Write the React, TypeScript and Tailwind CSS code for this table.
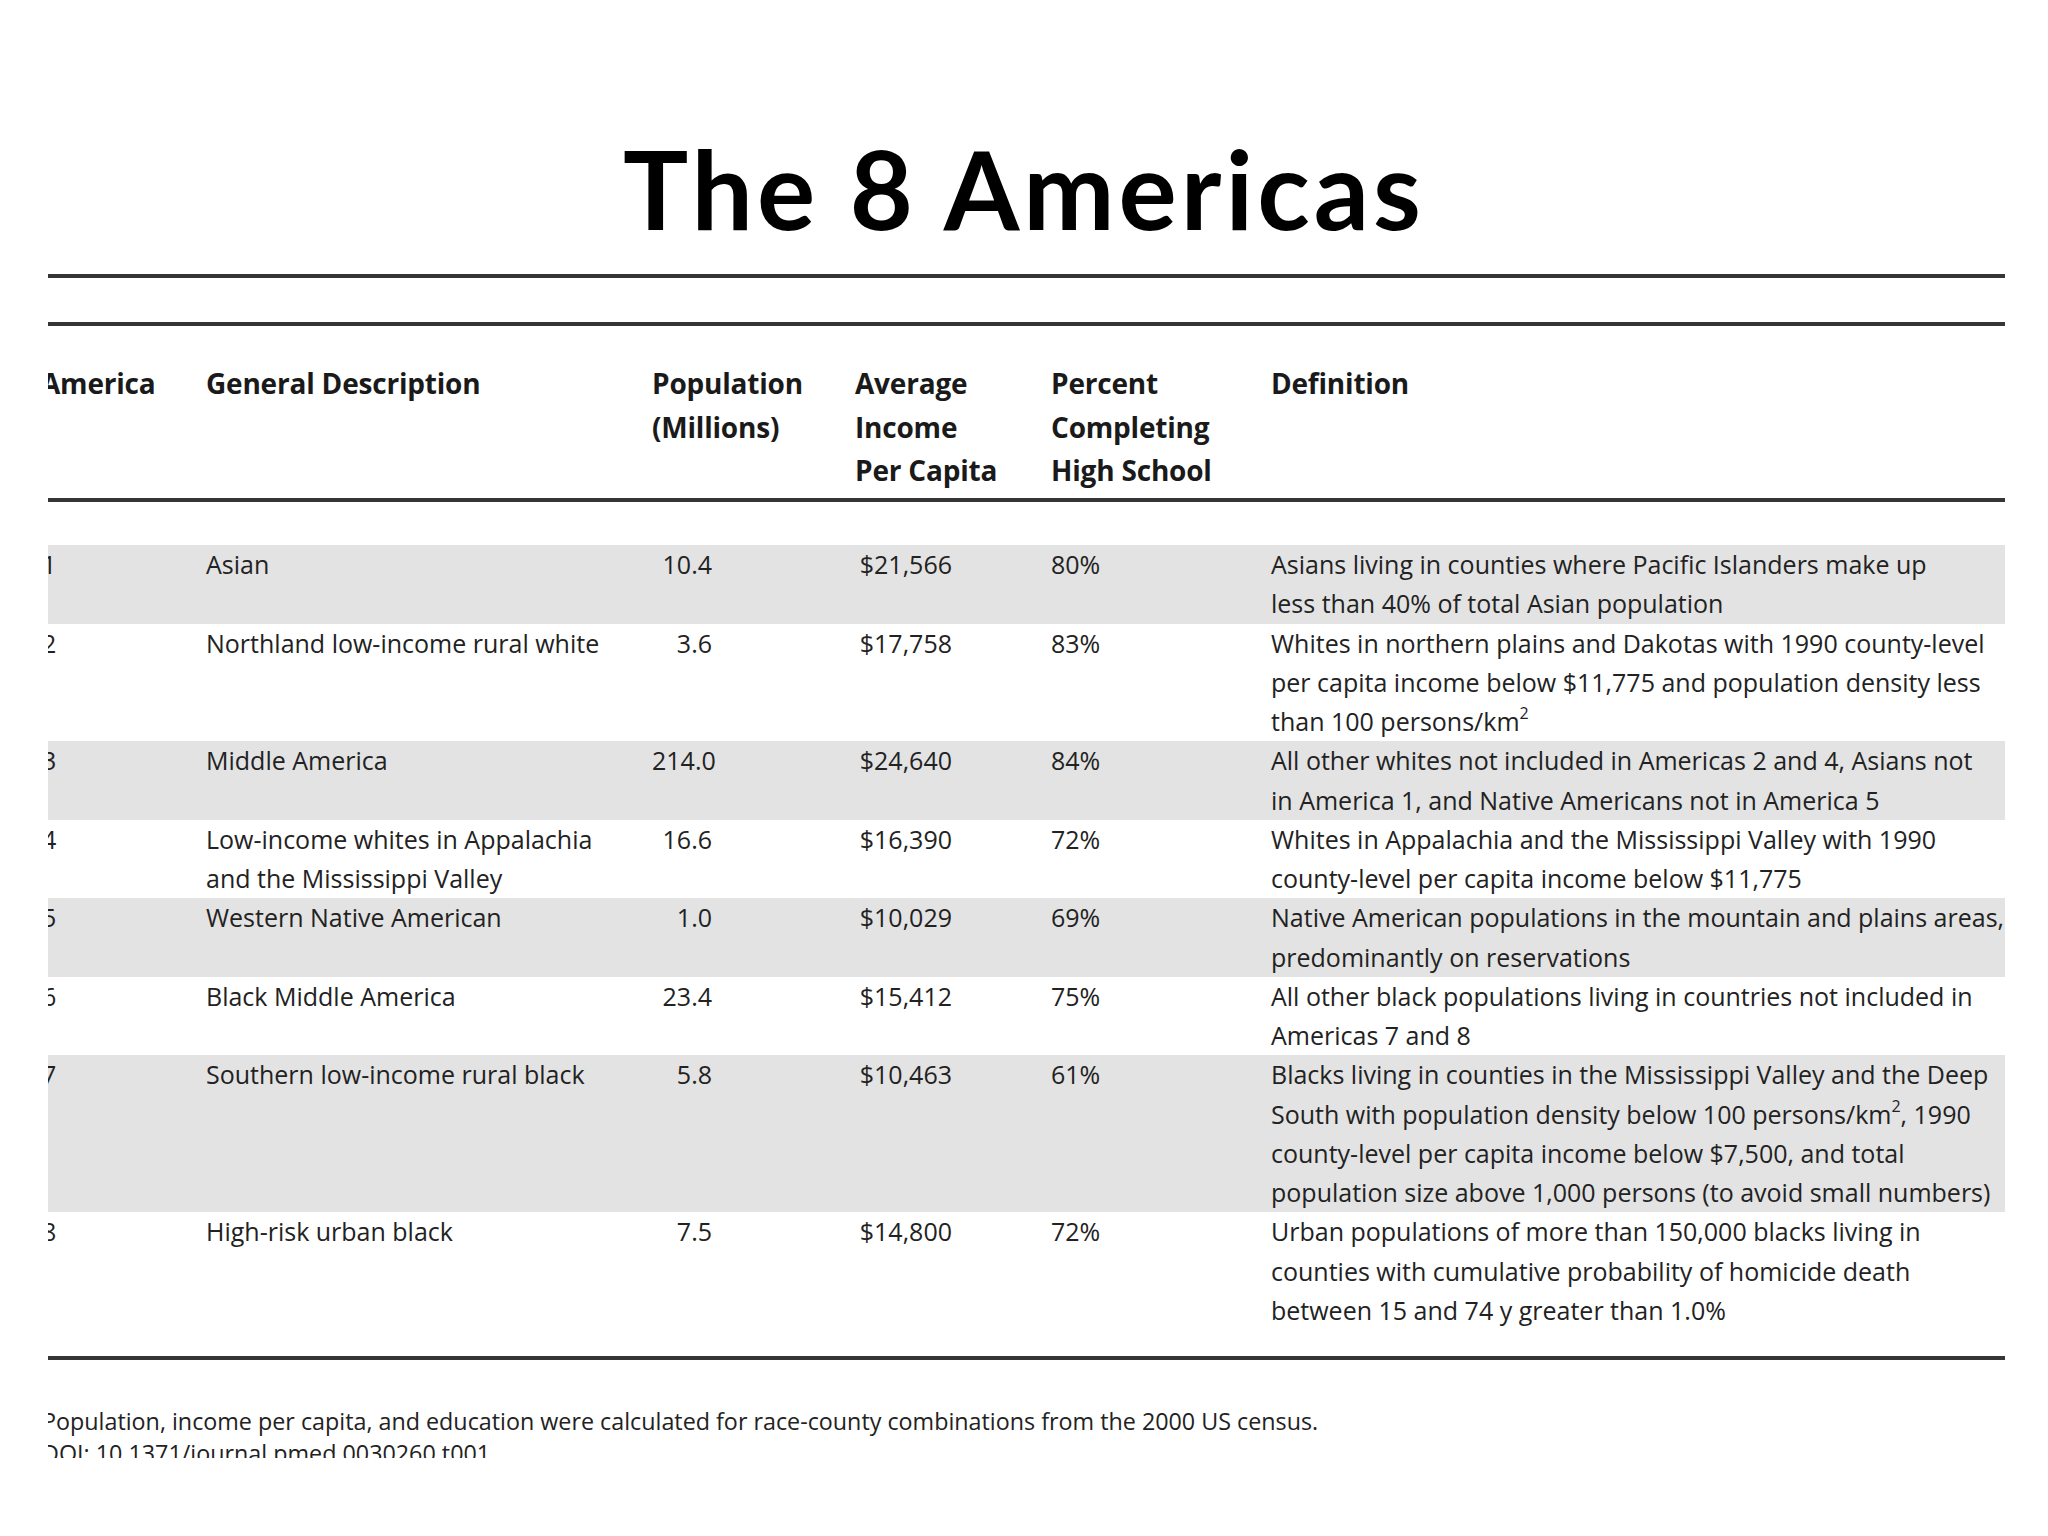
import React from "react";

type Row = {
  n: string;
  desc: React.ReactNode;
  pop: string;
  inc: string;
  pct: string;
  def: React.ReactNode;
};

const Km2 = () => (
  <>
    km<sup className="text-[16px] top-[-0.75em]">2</sup>
  </>
);

const rows: Row[] = [
  {
    n: "1",
    desc: "Asian",
    pop: "10.4",
    inc: "$21,566",
    pct: "80%",
    def: (
      <>
        Asians living in counties where Pacific Islanders make up
        <br />
        less than 40% of total Asian population
      </>
    ),
  },
  {
    n: "2",
    desc: "Northland low-income rural white",
    pop: "3.6",
    inc: "$17,758",
    pct: "83%",
    def: (
      <>
        Whites in northern plains and Dakotas with 1990 county-level
        <br />
        per capita income below $11,775 and population density less
        <br />
        than 100 persons/<Km2 />
      </>
    ),
  },
  {
    n: "3",
    desc: "Middle America",
    pop: "214.0",
    inc: "$24,640",
    pct: "84%",
    def: (
      <>
        All other whites not included in Americas 2 and 4, Asians not
        <br />
        in America 1, and Native Americans not in America 5
      </>
    ),
  },
  {
    n: "4",
    desc: (
      <>
        Low-income whites in Appalachia
        <br />
        and the Mississippi Valley
      </>
    ),
    pop: "16.6",
    inc: "$16,390",
    pct: "72%",
    def: (
      <>
        Whites in Appalachia and the Mississippi Valley with 1990
        <br />
        county-level per capita income below $11,775
      </>
    ),
  },
  {
    n: "5",
    desc: "Western Native American",
    pop: "1.0",
    inc: "$10,029",
    pct: "69%",
    def: (
      <>
        Native American populations in the mountain and plains areas,
        <br />
        predominantly on reservations
      </>
    ),
  },
  {
    n: "6",
    desc: "Black Middle America",
    pop: "23.4",
    inc: "$15,412",
    pct: "75%",
    def: (
      <>
        All other black populations living in countries not included in
        <br />
        Americas 7 and 8
      </>
    ),
  },
  {
    n: "7",
    desc: "Southern low-income rural black",
    pop: "5.8",
    inc: "$10,463",
    pct: "61%",
    def: (
      <>
        Blacks living in counties in the Mississippi Valley and the Deep
        <br />
        South with population density below 100 persons/<Km2 />, 1990
        <br />
        county-level per capita income below $7,500, and total
        <br />
        population size above 1,000 persons (to avoid small numbers)
      </>
    ),
  },
  {
    n: "8",
    desc: "High-risk urban black",
    pop: "7.5",
    inc: "$14,800",
    pct: "72%",
    def: (
      <>
        Urban populations of more than 150,000 blacks living in
        <br />
        counties with cumulative probability of homicide death
        <br />
        between 15 and 74 y greater than 1.0%
      </>
    ),
  },
];

const Rule = () => <div className="h-[4px] w-full bg-[#363636]" />;

export default function App() {
  return (
    <div className="w-[2048px] h-[1536px] bg-white overflow-hidden">
      <div className="pt-[133px] h-[274px]">
        <h1 className="text-center font-['Lato',sans-serif] font-bold text-[109px] tracking-[4px] leading-none text-black">
          The 8 Americas
        </h1>
      </div>

      <div className="ml-[48px] w-[1957px] overflow-hidden font-['Open_Sans',sans-serif]">
        <Rule />
        <div className="h-[44px]" />
        <Rule />

        <div className="ml-[-7px] w-[1964px] pt-[36px] pb-[5px] grid grid-cols-[165px_446px_203px_196px_220px_734px] text-[28px] leading-[43.7px] font-bold text-[#1a1a1a] tracking-[-0.2px] whitespace-nowrap">
          <div>America</div>
          <div>General Description</div>
          <div>
            Population
            <br />
            (Millions)
          </div>
          <div>
            Average
            <br />
            Income
            <br />
            Per Capita
          </div>
          <div>
            Percent
            <br />
            Completing
            <br />
            High School
          </div>
          <div>Definition</div>
        </div>

        <Rule />
        <div className="h-[43px]" />

        <div className="ml-[-6px] w-[1963px] text-[25px] leading-[39.25px] text-[#222222] whitespace-nowrap">
          {rows.map((r, i) => (
            <div
              key={r.n}
              className={
                "grid grid-cols-[164px_446px_203px_196px_220px_734px] " +
                (i % 2 === 0 ? "bg-[#e3e3e3]" : "bg-white")
              }
            >
              <div>{r.n}</div>
              <div>{r.desc}</div>
              <div>
                <div className="w-[60px] text-right">{r.pop}</div>
              </div>
              <div>
                <div className="w-[97px] text-right">{r.inc}</div>
              </div>
              <div>{r.pct}</div>
              <div>{r.def}</div>
            </div>
          ))}
        </div>

        <div className="h-[26px]" />
        <Rule />

        <div className="mt-[45px] ml-[-6px] h-[53px] overflow-hidden text-[23.3px] leading-[32px] text-[#222222] whitespace-nowrap">
          <div>
            Population, income per capita, and education were calculated for race-county combinations from the 2000 US census.
          </div>
          <div>DOI: 10.1371/journal.pmed.0030260.t001</div>
        </div>
      </div>
    </div>
  );
}
